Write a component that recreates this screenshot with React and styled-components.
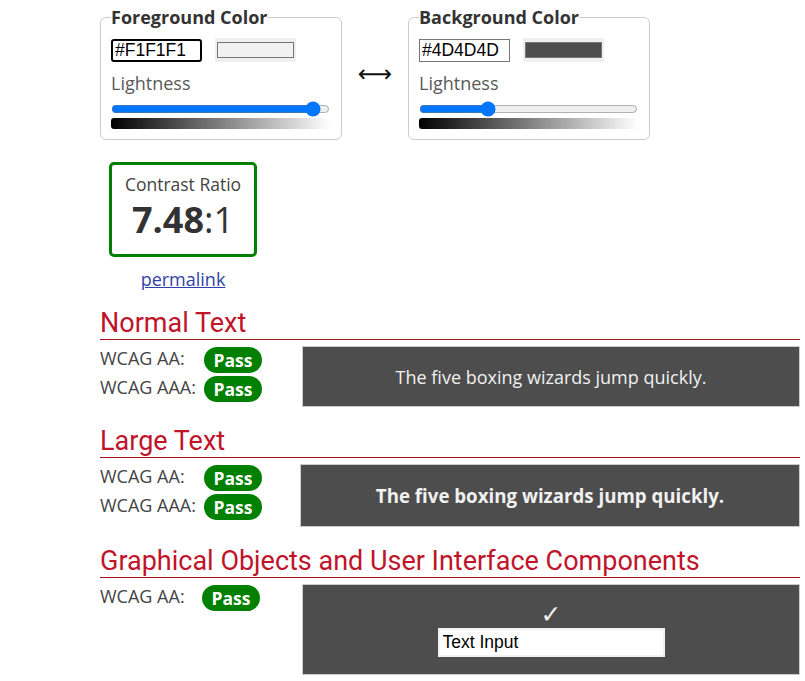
import React from "react";
import styled, { createGlobalStyle } from "styled-components";

const GlobalStyle = createGlobalStyle`
  body {
    margin: 0;
    background: #fff;
    font-family: "Open Sans", sans-serif;
    color: #444;
  }
`;

const Page = styled.main`
  width: 700px;
  margin-left: 100px;
  padding-top: 6px;
`;

// color pickers
const Pickers = styled.div`
  display: flex;
  align-items: center;
`;

const ColorSet = styled.fieldset`
  width: 219px;
  margin: 0;
  padding: 10px 11px 10px 10px;
  border: 1px solid #ccc;
  border-radius: 6px;
`;

const Legend = styled.legend`
  padding: 0;
  margin-left: 0;
  font-size: 18px;
  line-height: 22px;
  font-weight: 700;
  color: #333;
`;

const InputRow = styled.div`
  display: flex;
  align-items: center;
  gap: 13px;
`;

const HexInput = styled.input`
  box-sizing: border-box;
  width: 91px;
  height: 23px;
  padding: 0 2px;
  font-family: "Liberation Sans", Arial, sans-serif;
  font-size: 17.5px;
  color: #000;
  background: #fff;
  outline: none;
  border: ${(p) => (p.$focused ? "2px solid #000" : "1px solid #767676")};
  border-radius: ${(p) => (p.$focused ? "3px" : "0")};
`;

const Swatch = styled.div`
  box-sizing: border-box;
  width: 81px;
  height: 24px;
  padding: 4px 2px;
  background: #efefef;
`;

const SwatchFill = styled.div`
  height: 100%;
  box-sizing: border-box;
  border: 1px solid #767676;
  background: ${(p) => p.$color};
`;

const FieldLabel = styled.div`
  margin-top: 9px;
  font-size: 18px;
  line-height: 24px;
  color: #595959;
`;

const Slider = styled.input`
  display: block;
  width: 219px;
  height: 16px;
  margin: 6px 0 0;
`;

const Gradient = styled.div`
  height: 11px;
  margin-top: 1px;
  border-radius: 3px 0 0 3px;
  background: linear-gradient(to right, #000, #fff);
`;

const Swap = styled.div`
  width: 66px;
  text-align: center;
  font-family: "DejaVu Sans", sans-serif;
  font-size: 24px;
  color: #111;
  margin-top: 2px;
`;

// ratio
const RatioBox = styled.div`
  box-sizing: border-box;
  width: 148px;
  height: 95px;
  margin: 22px 0 0 9px;
  padding-top: 7px;
  border: 3px solid #008000;
  border-radius: 5px;
  text-align: center;
`;

const RatioLabel = styled.div`
  font-size: 17.5px;
  line-height: 24px;
  color: #444;
`;

const RatioValue = styled.div`
  margin-top: 4px;
  font-size: 36px;
  line-height: 40px;
  color: #333;

  b {
    font-weight: 700;
  }
`;

const Permalink = styled.a`
  display: block;
  width: 148px;
  margin: 10px 0 0 9px;
  text-align: center;
  font-size: 18px;
  line-height: 24px;
  color: #2f42a8;
  text-decoration: underline;
`;

// results
const Section = styled.section`
  margin-top: ${(p) => (p.$first ? 16 : 18)}px;
`;

const Heading = styled.h2`
  margin: 0;
  font-family: Roboto, sans-serif;
  font-weight: 400;
  font-size: 27px;
  line-height: 32px;
  color: #c0142b;
  border-bottom: 1px solid #a3161f;
`;

const ResultRow = styled.div`
  display: flex;
  align-items: flex-start;
  margin-top: 6px;
`;

const Checks = styled.div`
  width: ${(p) => p.$width}px;
  flex: none;
  margin-top: -1px;
`;

const Check = styled.div`
  display: flex;
  align-items: center;
  height: 29px;
`;

const Level = styled.span`
  width: ${(p) => p.$width}px;
  font-size: 18px;
  line-height: 24px;
  margin-top: -3px;
  color: #444;
`;

const Badge = styled.span`
  box-sizing: border-box;
  width: 58px;
  height: 26px;
  border-radius: 13px;
  background: #008000;
  color: #fff;
  font-weight: 700;
  font-size: 17.5px;
  line-height: 26px;
  text-align: center;
`;

const Sample = styled.div`
  flex: 1;
  box-sizing: border-box;
  height: ${(p) => p.$height}px;
  border: 1px solid #ccc;
  background: #4d4d4d;
  color: #f1f1f1;
  display: flex;
  flex-direction: column;
  align-items: center;
  justify-content: center;
  font-size: ${(p) => (p.$large ? "18.7px" : "18px")};
  font-weight: ${(p) => (p.$large ? 700 : 400)};
`;

const Tick = styled.div`
  font-family: "DejaVu Sans", sans-serif;
  font-size: 25px;
  line-height: 24px;
  color: #f1f1f1;
`;

const TextField = styled.input`
  box-sizing: border-box;
  width: 227px;
  height: 29px;
  margin-top: 1px;
  padding: 0 3px;
  border: 2px solid #f1f1f1;
  background: #fff;
  font-family: "Liberation Sans", Arial, sans-serif;
  font-size: 17.5px;
  color: #000;
  outline: none;
`;

const Picker = ({ title, hex, lightness, focused }) => (
  <ColorSet>
    <Legend>{title}</Legend>
    <InputRow>
      <HexInput $focused={focused} value={hex} readOnly />
      <Swatch>
        <SwatchFill $color={hex} />
      </Swatch>
    </InputRow>
    <FieldLabel>Lightness</FieldLabel>
    <Slider type="range" min="0" max="100" step="0.1" defaultValue={lightness} />
    <Gradient />
  </ColorSet>
);

const Results = ({ title, levels, labelWidth, colWidth, first, children, ...rest }) => (
  <Section $first={first}>
    <Heading>{title}</Heading>
    <ResultRow>
      <Checks $width={colWidth}>
        {levels.map((l) => (
          <Check key={l}>
            <Level $width={labelWidth}>{l}:</Level>
            <Badge>Pass</Badge>
          </Check>
        ))}
      </Checks>
      <Sample {...rest}>{children}</Sample>
    </ResultRow>
  </Section>
);

export default function App() {
  return (
    <>
      <GlobalStyle />
      <Page>
        <Pickers>
          <Picker title="Foreground Color" hex="#F1F1F1" lightness={95.5} focused />
          <Swap>⟷</Swap>
          <Picker title="Background Color" hex="#4D4D4D" lightness={30} />
        </Pickers>

        <RatioBox>
          <RatioLabel>Contrast Ratio</RatioLabel>
          <RatioValue>
            <b>7.48</b>:1
          </RatioValue>
        </RatioBox>
        <Permalink href="#">permalink</Permalink>

        <Results first title="Normal Text" levels={["WCAG AA", "WCAG AAA"]} labelWidth={104} colWidth={202} $height={61}>
          The five boxing wizards jump quickly.
        </Results>
        <Results title="Large Text" levels={["WCAG AA", "WCAG AAA"]} labelWidth={104} colWidth={200} $height={63} $large>
          The five boxing wizards jump quickly.
        </Results>
        <Results title="Graphical Objects and User Interface Components" levels={["WCAG AA"]} labelWidth={102} colWidth={202} $height={91}>
          <Tick>✓</Tick>
          <TextField value="Text Input" readOnly />
        </Results>
      </Page>
    </>
  );
}
